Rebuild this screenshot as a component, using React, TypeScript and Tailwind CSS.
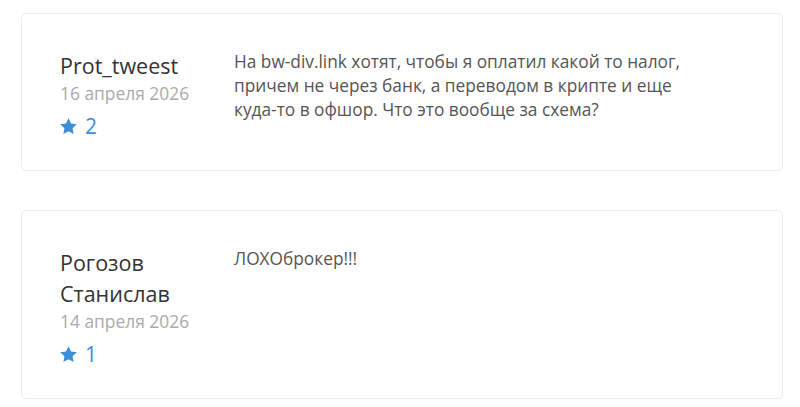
import React from 'react';

const reviews = [
  {
    name: 'Prot_tweest',
    date: '16 апреля 2026',
    rating: 2,
    text: 'На bw-div.link хотят, чтобы я оплатил какой то налог, причем не через банк, а переводом в крипте и еще куда-то в офшор. Что это вообще за схема?',
  },
  {
    name: 'Рогозов Станислав',
    date: '14 апреля 2026',
    rating: 1,
    text: 'ЛОХОброкер!!!',
  },
];

function Star() {
  return (
    <svg viewBox="0 0 24 24" className="w-[19px] h-[19px] fill-[#3b8fd8] -ml-[1px]">
      <path d="M12 1.5l3.2 6.7 7.3.9-5.4 5.1 1.4 7.3L12 18l-6.5 3.5 1.4-7.3-5.4-5.1 7.3-.9z" />
    </svg>
  );
}

export default function App() {
  return (
    <div className="bg-white min-h-[407px] pl-[21px] pr-[17px] pt-[13px] flex flex-col gap-[39px] font-['Open_Sans',sans-serif]">
      {reviews.map((r) => (
        <div
          key={r.name}
          className="flex border border-[#ececec] rounded-[5px] pl-[38px] pt-[36px] pb-[32px]"
        >
          <div className="w-[174px] shrink-0">
            <div className="text-[21.5px] leading-[31px] text-[#333] w-[130px]">{r.name}</div>
            <div className="text-[17.4px] leading-[24px] text-[#aaa]">{r.date}</div>
            <div className="mt-[9px] flex items-center gap-[7px] h-[24px]">
              <Star />
              <span className="text-[21px] leading-[24px] text-[#3b8fd8]">{r.rating}</span>
            </div>
          </div>
          <p className="w-[455px] text-[17.3px] leading-[24px] text-[#555]">{r.text}</p>
        </div>
      ))}
    </div>
  );
}
